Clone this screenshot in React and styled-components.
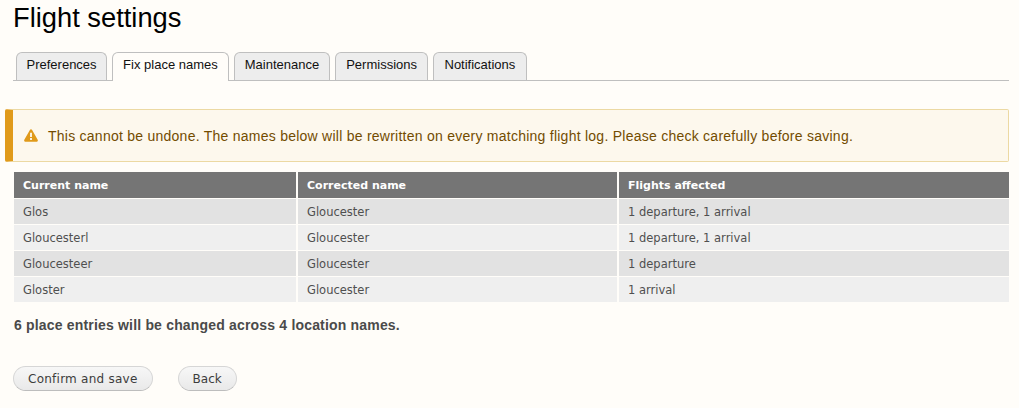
import React from 'react'
import styled, { createGlobalStyle } from 'styled-components'

const GlobalStyle = createGlobalStyle`
  html, body {
    margin: 0;
    background: #fffdf9;
  }
`

const Page = styled.div`
  width: 1019px;
  height: 408px;
  overflow: hidden;
  box-sizing: border-box;
  padding: 0 10px 0 5px;
  font-family: "Liberation Sans", Arial, sans-serif;
`

const Header = styled.div`
  padding-left: 8px;
`

const Title = styled.h1`
  margin: 0;
  padding-top: 2px;
  height: 52px;
  box-sizing: border-box;
  font-size: 27.3px;
  line-height: 32px;
  font-weight: 400;
  color: #000;
`

const Tabs = styled.ul`
  display: flex;
  gap: 5px;
  margin: 0;
  padding: 0 0 0 3px;
  list-style: none;
  height: 29px;
  box-sizing: border-box;
  border-bottom: 1px solid #bfbfbf;
`

const Tab = styled.li`
  box-sizing: border-box;
  height: ${p => (p.$active ? '29px' : '28px')};
  padding: 0 10px;
  border: 1px solid #bfbfbf;
  border-bottom: 0;
  border-radius: 6px 6px 0 0;
  background: ${p => (p.$active ? '#fffdf9' : '#ededed')};
  font-size: 13px;
  line-height: 23px;
  color: #111;
  &:first-child { padding: 0 9.5px; }
  &:last-child { padding: 0 10.5px; }
`

const Warning = styled.div`
  display: flex;
  align-items: center;
  gap: 10px;
  box-sizing: border-box;
  height: 53px;
  margin-top: 28px;
  padding-left: 11px;
  background: #fdf8ed;
  border: 1px solid #ecd9a3;
  border-left: 8px solid #e09a1a;
  border-radius: 2px;
  color: #734c00;
  font-size: 14px;
  letter-spacing: 0.25px;
`

const WarnIcon = styled.svg`
  flex: none;
  width: 14px;
  height: 13px;
`

const Table = styled.table`
  width: 995px;
  margin: 10px 0 0 9px;
  border-collapse: collapse;
  table-layout: fixed;
  font-family: "DejaVu Sans", Verdana, sans-serif;
  font-size: 11.5px;
`

const HeadCell = styled.th`
  height: 26px;
  padding: 0 9px;
  background: #757575;
  color: #fff;
  font-size: 11px;
  font-weight: 700;
  text-align: left;
  border-left: 2px solid #fffdf9;
  border-bottom: 1px solid #fffdf9;
  &:first-child { border-left: 0; }
`

const Row = styled.tr`
  background: ${p => (p.$odd ? '#e2e2e2' : '#efefef')};
`

const Cell = styled.td`
  height: 25px;
  padding: 0 9px;
  color: #4f4f4f;
  border-left: 2px solid #fffdf9;
  border-bottom: 1px solid #fffdf9;
  &:first-child { border-left: 0; }
`

const Summary = styled.p`
  margin: 14px 0 0 9px;
  font-size: 14px;
  line-height: 16px;
  font-weight: 700;
  letter-spacing: 0.18px;
  color: #4a4a4a;
`

const Actions = styled.div`
  display: flex;
  gap: 25px;
  margin: 33px 0 0 8px;
`

const Button = styled.button`
  box-sizing: border-box;
  height: 25px;
  padding: 1px 14px 0;
  border: 1px solid #d6d6d6;
  border-bottom-color: #bdbdbd;
  border-radius: 13px;
  background: linear-gradient(#f7f7f7, #e9e9e9);
  font-family: "DejaVu Sans", Verdana, sans-serif;
  font-size: 12px;
  letter-spacing: ${p => (p.$tight ? '0' : '0.25px')};
  color: #3c3c3c;
`

const tabs = ['Preferences', 'Fix place names', 'Maintenance', 'Permissions', 'Notifications']

const rows = [
  ['Glos', 'Gloucester', '1 departure, 1 arrival'],
  ['Gloucesterl', 'Gloucester', '1 departure, 1 arrival'],
  ['Gloucesteer', 'Gloucester', '1 departure'],
  ['Gloster', 'Gloucester', '1 arrival'],
]

export default function App() {
  return (
    <Page>
      <GlobalStyle />
      <Header>
        <Title>Flight settings</Title>
        <Tabs>
          {tabs.map((t, i) => (
            <Tab key={t} $active={i === 1}>{t}</Tab>
          ))}
        </Tabs>
      </Header>
      <Warning>
        <WarnIcon viewBox="0 0 15 14">
          <path
            fillRule="evenodd"
            fill="#e09a1a"
            d="M7.5 0.3c.5 0 .9.3 1.2.8l6 10.6c.5.9-.1 2-1.2 2H1.5c-1.1 0-1.7-1.1-1.2-2l6-10.6c.3-.5.7-.8 1.2-.8zM6.5 4v4.6h2V4h-2zM6.5 9.8v2h2v-2h-2z"
          />
        </WarnIcon>
        This cannot be undone. The names below will be rewritten on every matching flight log. Please check carefully before saving.
      </Warning>
      <Table>
        <colgroup>
          <col style={{ width: 283 }} />
          <col style={{ width: 321 }} />
          <col />
        </colgroup>
        <thead>
          <tr>
            <HeadCell>Current name</HeadCell>
            <HeadCell>Corrected name</HeadCell>
            <HeadCell>Flights affected</HeadCell>
          </tr>
        </thead>
        <tbody>
          {rows.map((r, i) => (
            <Row key={r[0]} $odd={i % 2 === 0}>
              {r.map((c, j) => (
                <Cell key={j}>{c}</Cell>
              ))}
            </Row>
          ))}
        </tbody>
      </Table>
      <Summary>6 place entries will be changed across 4 location names.</Summary>
      <Actions>
        <Button>Confirm and save</Button>
        <Button $tight>Back</Button>
      </Actions>
    </Page>
  )
}
